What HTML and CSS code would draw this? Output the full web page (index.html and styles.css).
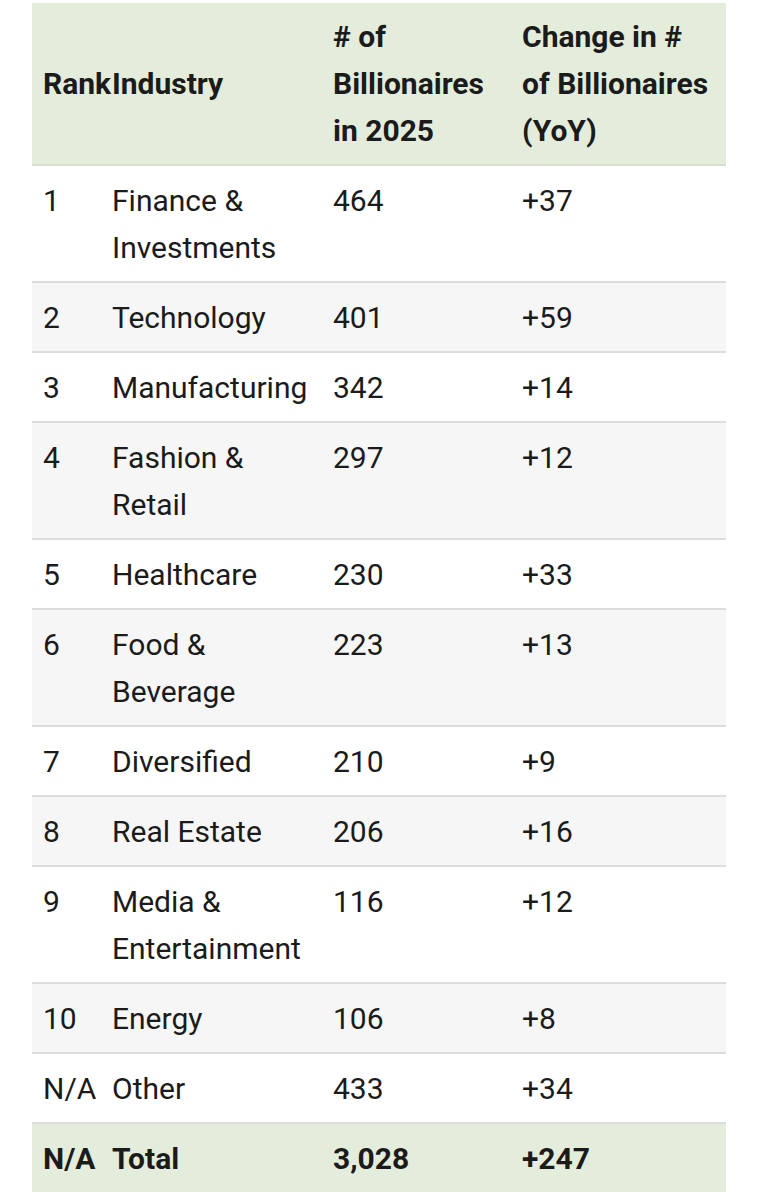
FILE: index.html
```html
<!DOCTYPE html>
<html lang="en">
<head>
<meta charset="utf-8">
<title>Billionaires by Industry</title>
<link rel="stylesheet" href="styles.css">
</head>
<body>
<div class="wrap">
<table class="bill">
  <colgroup>
    <col class="c-rank">
    <col class="c-ind">
    <col class="c-num">
    <col class="c-chg">
  </colgroup>
  <thead>
    <tr>
      <th>Rank</th>
      <th>Industry</th>
      <th># of Billionaires in 2025</th>
      <th>Change in # of Billionaires (YoY)</th>
    </tr>
  </thead>
  <tbody>
    <tr><td>1</td><td>Finance &amp; Investments</td><td>464</td><td>+37</td></tr>
    <tr><td>2</td><td>Technology</td><td>401</td><td>+59</td></tr>
    <tr><td>3</td><td>Manufacturing</td><td>342</td><td>+14</td></tr>
    <tr><td>4</td><td>Fashion &amp; Retail</td><td>297</td><td>+12</td></tr>
    <tr><td>5</td><td>Healthcare</td><td>230</td><td>+33</td></tr>
    <tr><td>6</td><td>Food &amp; Beverage</td><td>223</td><td>+13</td></tr>
    <tr><td>7</td><td>Diversified</td><td>210</td><td>+9</td></tr>
    <tr><td>8</td><td>Real Estate</td><td>206</td><td>+16</td></tr>
    <tr><td>9</td><td>Media &amp; Entertainment</td><td>116</td><td>+12</td></tr>
    <tr><td>10</td><td>Energy</td><td>106</td><td>+8</td></tr>
    <tr><td>N/A</td><td>Other</td><td>433</td><td>+34</td></tr>
    <tr class="total"><td>N/A</td><td>Total</td><td>3,028</td><td>+247</td></tr>
  </tbody>
</table>
</div>
</body>
</html>
```

FILE: styles.css
```css
html, body {
  margin: 0;
  padding: 0;
  background: #ffffff;
}

.wrap {
  padding: 3px 32px 0 32px;
}

.bill {
  width: 694px;
  table-layout: fixed;
  border-collapse: collapse;
  font-family: Roboto, "Liberation Sans", sans-serif;
  font-size: 30px;
  line-height: 47px;
  color: #1b1b1b;
}

.c-rank { width: 69px; }
.c-ind { width: 221px; }
.c-num { width: 189px; }
.c-chg { width: 215px; }

.bill th,
.bill td {
  text-align: left;
  vertical-align: top;
  padding: 11px 11px 10px 11px;
  overflow: visible;
}

.bill th:first-child,
.bill td:first-child {
  white-space: nowrap;
  padding-right: 0;
}

.bill th {
  font-weight: 700;
  vertical-align: middle;
  background: #e4eddb;
  border-bottom: 2px solid #d9ddd4;
  padding-top: 10px;
  padding-bottom: 10px;
}

.bill tbody tr {
  border-bottom: 2px solid #dddddd;
}

.bill tbody tr:nth-child(even) {
  background: #f6f6f6;
}

.bill tbody tr.total {
  background: #e4eddb;
  font-weight: 700;
  border-bottom: none;
}
```
